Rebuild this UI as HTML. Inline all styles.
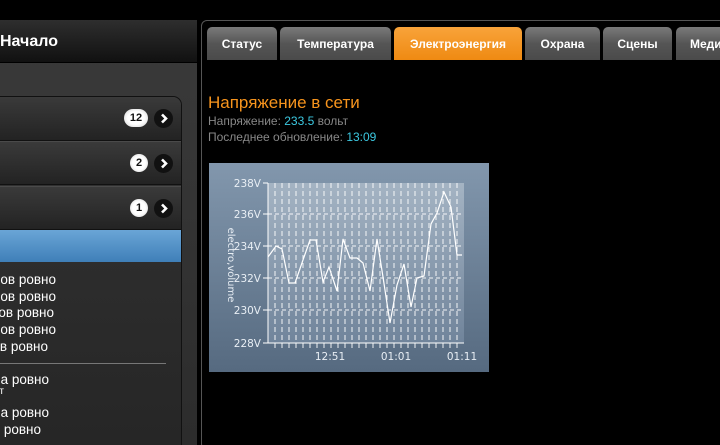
<!DOCTYPE html>
<html style="width:720px;height:445px;overflow:hidden"><head><meta charset="utf-8"><style>
*{margin:0;padding:0;box-sizing:border-box}
body{width:720px;height:445px;background:#000;position:relative;overflow:hidden;font-family:"Liberation Sans",sans-serif}
.lp{position:absolute;left:0;top:20px;width:197px;height:425px;background:linear-gradient(#3a3a3a,#2c2c2c);}
.hdr{position:absolute;left:0;top:20px;width:197px;height:43px;background:linear-gradient(#2e2e2e,#111);color:#fff;font-weight:bold;font-size:16px;line-height:43px;border-bottom:1px solid #000}
.list{position:absolute;left:-10px;top:96px;width:192px;height:349px;border:1px solid #111;border-bottom:none;border-radius:0 9px 0 0;background:linear-gradient(#333,#262626);overflow:hidden}
.row{position:absolute;left:0;width:192px;height:44px;background:linear-gradient(#3a3a3a,#232323);border-bottom:1px solid #111;border-top:1px solid #4a4a4a}
.cnt{position:absolute;top:12px;height:18px;border-radius:9px;background:radial-gradient(#fff 50%,#ccc);color:#111;font-size:11px;font-weight:bold;text-align:center;line-height:18px}
.arr{position:absolute;top:12px;left:163px;width:19px;height:19px;border-radius:50%;background:#111;}
.arr svg{position:absolute;left:0;top:0}
.blue{position:absolute;left:0;top:133px;width:192px;height:32px;background:linear-gradient(#6aa5d6,#3f7fb8)}
.t{position:absolute;color:#fff;font-size:13.5px;text-align:right;white-space:nowrap}
.rp{position:absolute;left:201px;top:20px;width:540px;height:430px;border:1px solid #555;border-radius:6px;background:#000}
.tab{position:absolute;top:27px;height:33px;border-radius:5px 5px 0 0;background:linear-gradient(#7a7a7a,#555 50%,#4a4a4a);color:#fff;font-weight:bold;font-size:12px;line-height:35px;text-align:center;white-space:nowrap;overflow:hidden}
.tab.on{background:linear-gradient(#f8a33a,#ef8a12)}
</style></head><body>
<div class="lp"></div>
<div class="hdr">Начало</div>
<div class="list">
 <div class="row" style="top:0;border-top:none"><div class="cnt" style="left:133px;width:24px">12</div><div class="arr"><svg width="19" height="19"><path d="M8 5.5 L12 9.5 L8 13.5" fill="none" stroke="#fff" stroke-width="2.6"/></svg></div></div>
 <div class="row" style="top:44px"><div class="cnt" style="left:139px;width:18px">2</div><div class="arr"><svg width="19" height="19"><path d="M8 5.5 L12 9.5 L8 13.5" fill="none" stroke="#fff" stroke-width="2.6"/></svg></div></div>
 <div class="row" style="top:89px"><div class="cnt" style="left:139px;width:18px">1</div><div class="arr"><svg width="19" height="19"><path d="M8 5.5 L12 9.5 L8 13.5" fill="none" stroke="#fff" stroke-width="2.6"/></svg></div></div>
 <div class="blue"></div>
</div>
<div style="position:absolute;left:0;top:363px;width:166px;height:1px;background:#777"></div>
<div class="t" style="right:664px;top:272px">ов ровно</div>
<div class="t" style="right:664px;top:289px">ов ровно</div>
<div class="t" style="right:666px;top:305px">ов ровно</div>
<div class="t" style="right:664px;top:322px">ов ровно</div>
<div class="t" style="right:672px;top:339px">в ровно</div>
<div class="t" style="right:671px;top:372px">а ровно</div>
<div class="t" style="right:716px;top:386px;font-size:10px">т</div>
<div class="t" style="right:671px;top:405px">а ровно</div>
<div class="t" style="right:679px;top:422px">ровно</div>

<div class="rp"></div>
<div class="tab" style="left:207px;width:70px">Статус</div>
<div class="tab" style="left:280px;width:111px">Температура</div>
<div class="tab on" style="left:394px;width:128px">Электроэнергия</div>
<div class="tab" style="left:525px;width:75px">Охрана</div>
<div class="tab" style="left:603px;width:69px">Сцены</div>
<div class="tab" style="left:676px;width:60px;text-align:left;padding-left:14px">Медиа</div>

<div style="position:absolute;left:208px;top:93px;color:#f7941d;font-size:17px">Напряжение в сети</div>
<div style="position:absolute;left:208px;top:114px;color:#888;font-size:12px">Напряжение: <span style="color:#3cc8e0">233.5</span> вольт</div>
<div style="position:absolute;left:208px;top:130px;color:#888;font-size:12px">Последнее обновление: <span style="color:#3cc8e0">13:09</span></div>

<svg style="position:absolute;left:209px;top:163px" width="280" height="209" viewBox="209 163 280 209">
<defs><linearGradient id="g" x1="0" y1="0" x2="0" y2="1"><stop offset="0" stop-color="#8297ad"/><stop offset="1" stop-color="#566a80"/></linearGradient>
<linearGradient id="p" x1="0" y1="0" x2="0" y2="1"><stop offset="0" stop-color="#aebcca"/><stop offset="1" stop-color="#7589a0"/></linearGradient></defs>
<rect x="209" y="163" width="280" height="209" fill="url(#g)"/>
<rect x="268" y="183" width="196" height="160" fill="url(#p)" opacity="0.8"/>
<g stroke="#fff" stroke-width="1" stroke-dasharray="4,3" opacity="0.9">
<line x1="268" y1="214" x2="464" y2="214"/><line x1="268" y1="246" x2="464" y2="246"/><line x1="268" y1="278" x2="464" y2="278"/><line x1="268" y1="310" x2="464" y2="310"/>
</g>
<g stroke="#fff" stroke-width="1" stroke-dasharray="5,3" opacity="0.9">
<line x1="275" y1="183" x2="275" y2="349"/><line x1="282" y1="183" x2="282" y2="349"/><line x1="289" y1="183" x2="289" y2="349"/><line x1="296" y1="183" x2="296" y2="349"/><line x1="303" y1="183" x2="303" y2="349"/><line x1="310" y1="183" x2="310" y2="349"/><line x1="317" y1="183" x2="317" y2="349"/><line x1="324" y1="183" x2="324" y2="349"/><line x1="331" y1="183" x2="331" y2="349"/><line x1="338" y1="183" x2="338" y2="349"/><line x1="345" y1="183" x2="345" y2="349"/><line x1="352" y1="183" x2="352" y2="349"/><line x1="359" y1="183" x2="359" y2="349"/><line x1="366" y1="183" x2="366" y2="349"/><line x1="373" y1="183" x2="373" y2="349"/><line x1="380" y1="183" x2="380" y2="349"/><line x1="387" y1="183" x2="387" y2="349"/><line x1="394" y1="183" x2="394" y2="349"/><line x1="401" y1="183" x2="401" y2="349"/><line x1="408" y1="183" x2="408" y2="349"/><line x1="415" y1="183" x2="415" y2="349"/><line x1="422" y1="183" x2="422" y2="349"/><line x1="429" y1="183" x2="429" y2="349"/><line x1="436" y1="183" x2="436" y2="349"/><line x1="443" y1="183" x2="443" y2="349"/><line x1="450" y1="183" x2="450" y2="349"/><line x1="457" y1="183" x2="457" y2="349"/>
</g>
<g stroke="#fff" stroke-width="1">
<line x1="268" y1="183" x2="268" y2="343"/><line x1="268" y1="343" x2="464" y2="343"/>
<line x1="263" y1="183" x2="268" y2="183"/><line x1="263" y1="214" x2="268" y2="214"/><line x1="263" y1="246" x2="268" y2="246"/><line x1="263" y1="278" x2="268" y2="278"/><line x1="263" y1="310" x2="268" y2="310"/><line x1="263" y1="343" x2="268" y2="343"/>
</g>
<polyline fill="none" stroke="#fff" stroke-width="1.2" points="268,257 276,246 282,249 289,283 295,283 303,260 310,240 316,240 323,282 329,267 337,291 343,239 350,258 357,258 363,263 370,291 377,239 383,277 390,323 397,285 404,264 411,307 417,278 424,276 431,224 437,213 444,192 451,207 457,255 462,255"/>
<g fill="#e8eef4" font-family="DejaVu Sans,sans-serif" font-size="10.5" text-anchor="end">
<text x="261" y="187">238V</text><text x="261" y="218">236V</text><text x="261" y="250">234V</text><text x="261" y="282">232V</text><text x="261" y="314">230V</text><text x="261" y="347">228V</text>
</g>
<g fill="#e8eef4" font-family="DejaVu Sans,sans-serif" font-size="10.5" text-anchor="middle">
<text x="330" y="360">12:51</text><text x="396" y="360">01:01</text><text x="462" y="360">01:11</text>
</g>
<text transform="translate(228,265) rotate(90)" fill="#e8eef4" font-family="DejaVu Sans,sans-serif" font-size="10" text-anchor="middle">electro,volume</text>
</svg>
</body></html>
